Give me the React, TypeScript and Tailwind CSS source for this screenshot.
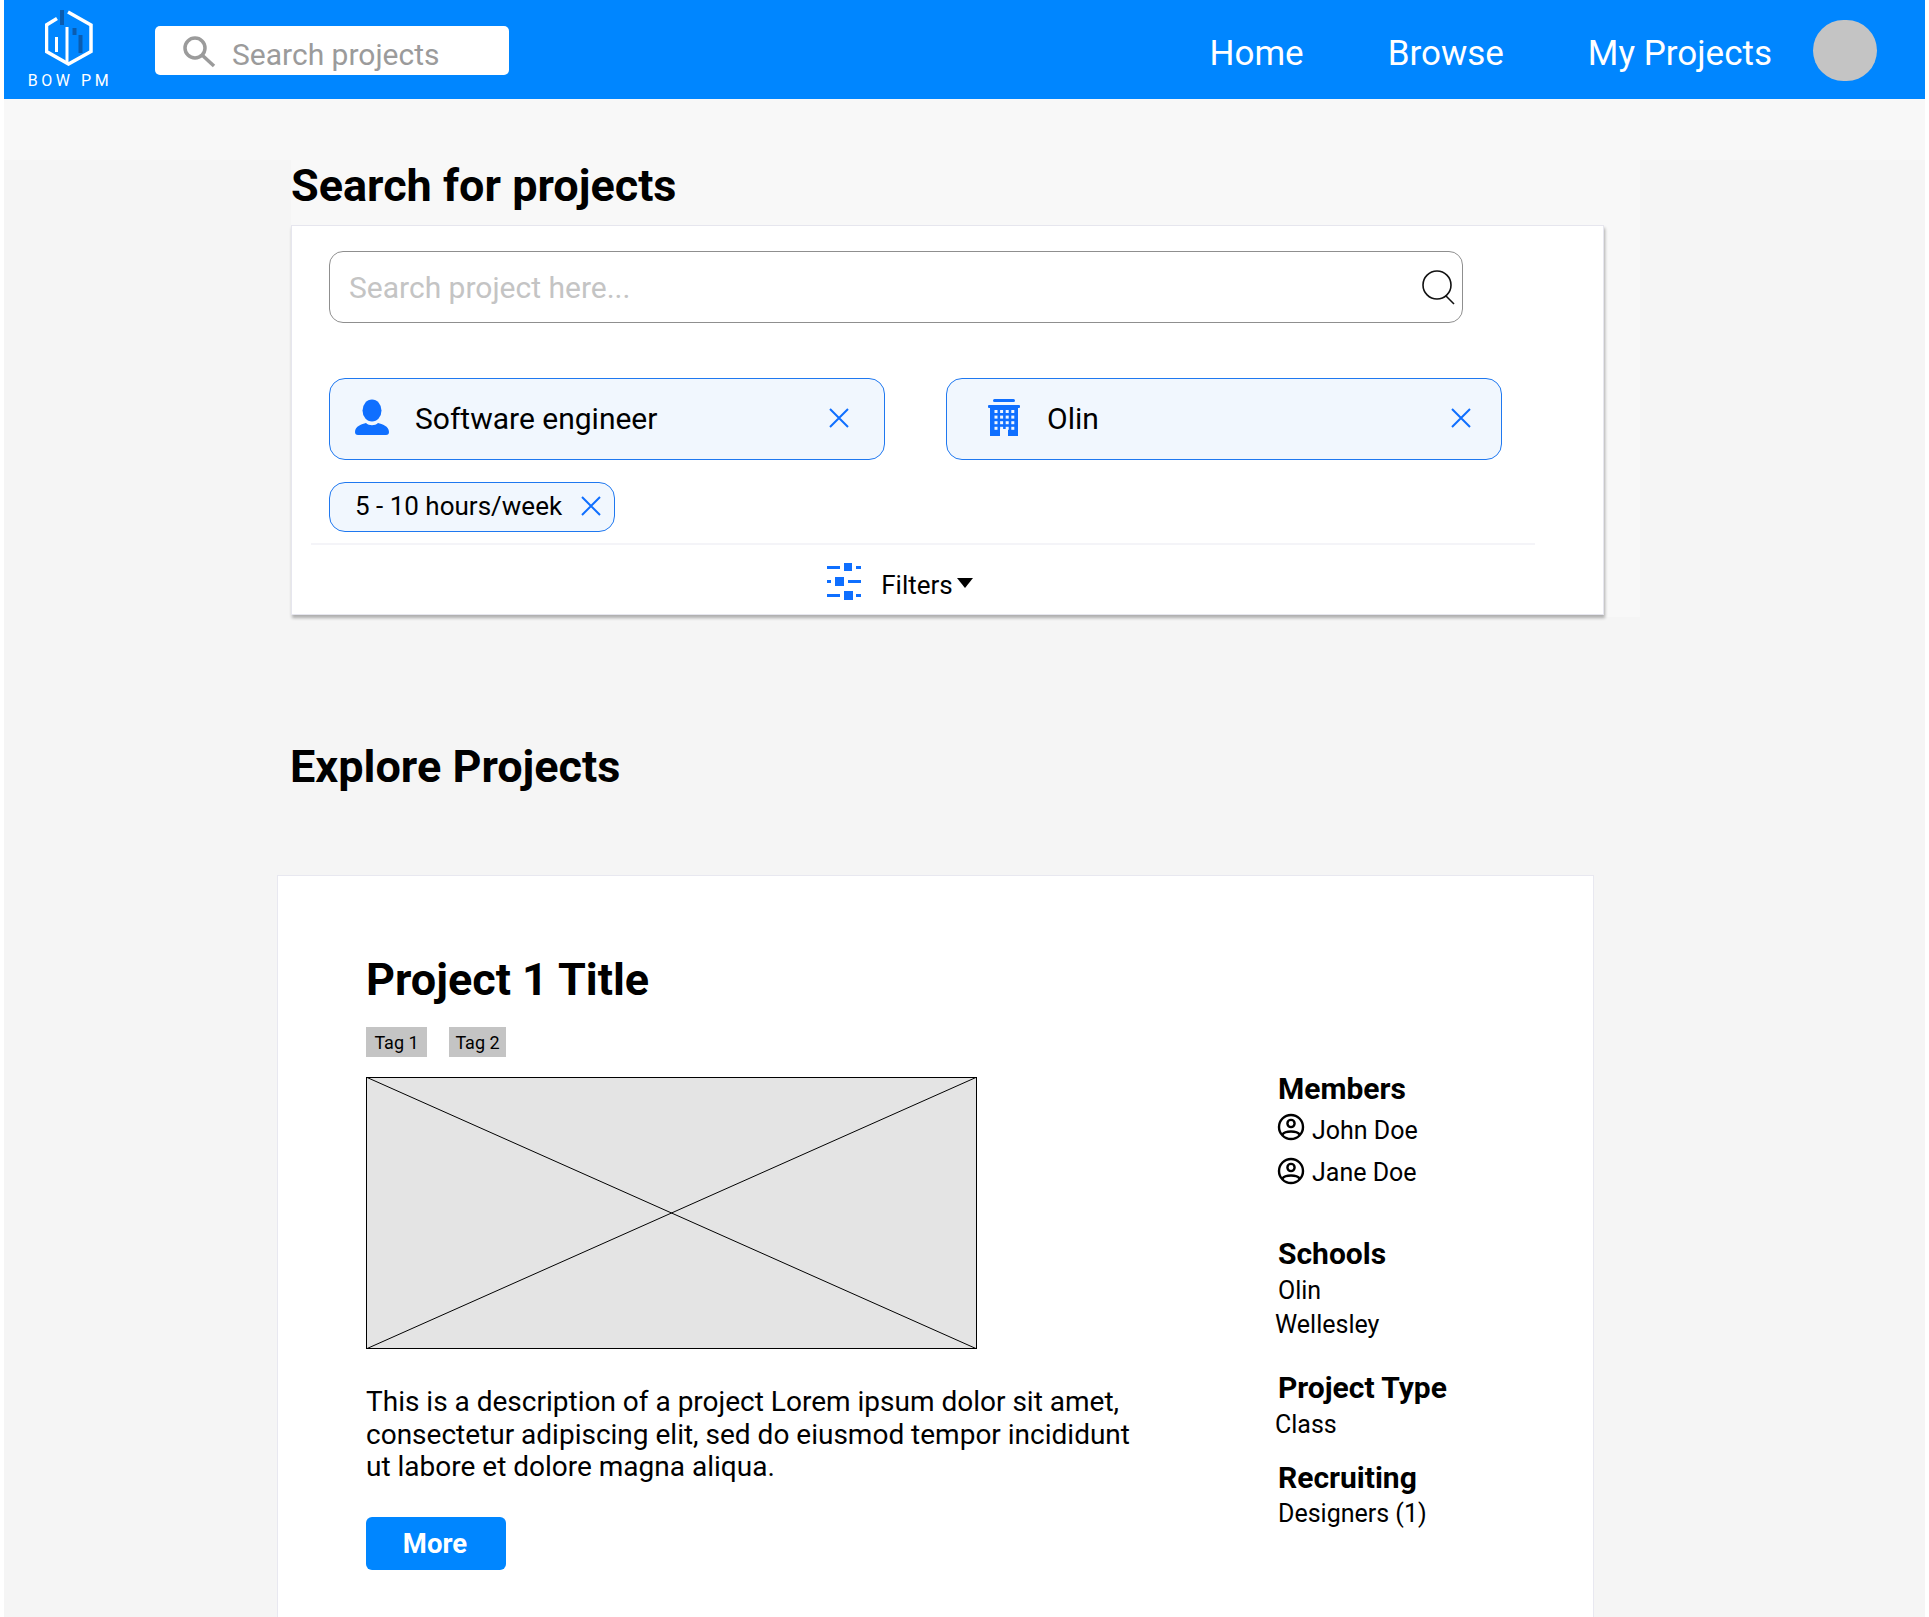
const roboto = "font-['Roboto',sans-serif]";

function Logo() {
  return (
    <svg width="48" height="56" viewBox="0 0 48 56" fill="none">
      <path d="M12 8.5 L1.5 15 V41.5 L23.5 54 L46 41.5 V15 L23 2" stroke="#fff" strokeWidth="3.5" />
      <path d="M22 17 V53" stroke="#fff" strokeWidth="3" />
      <path d="M11.5 27 V42" stroke="#fff" strokeWidth="3" />
      <path d="M17 0 V15" stroke="#0a5cb0" strokeWidth="4" />
      <path d="M29.5 18 V25" stroke="#0a5cb0" strokeWidth="4" />
      <path d="M35.5 25 V43" stroke="#0a5cb0" strokeWidth="4" />
    </svg>
  );
}

function CloseIcon() {
  return (
    <svg width="22" height="22" viewBox="0 0 22 22" fill="none" stroke="#0f6fff" strokeWidth="2">
      <path d="M2 2 L20 20 M20 2 L2 20" />
    </svg>
  );
}

function PersonIcon() {
  return (
    <svg width="36" height="38" viewBox="0 0 36 38" fill="#0f6fff">
      <ellipse cx="18" cy="11.5" rx="9.5" ry="11" />
      <path d="M1 33 C1 27 8 25 12 24 C15 27 21 27 24 24 C28 25 35 27 35 33 C35 35 34 36 32 36 H4 C2 36 1 35 1 33 Z" />
    </svg>
  );
}

function BuildingIcon() {
  const cells = [];
  for (let r = 0; r < 4; r++) {
    for (let c = 0; c < 4; c++) {
      cells.push(<rect key={`${r}-${c}`} x={6.5 + c * 5.6} y={11 + r * 5.6} width="3" height="3" fill="#f1f7fe" />);
    }
  }
  return (
    <svg width="32" height="38" viewBox="0 0 32 38">
      <rect x="5" y="0" width="22" height="3" rx="1.5" fill="#0f6fff" />
      <rect x="0" y="6" width="32" height="3" rx="1" fill="#0f6fff" />
      <rect x="2" y="8" width="28" height="29" fill="#0f6fff" />
      {cells}
      <rect x="12" y="30" width="8" height="7" fill="#f1f7fe" />
    </svg>
  );
}

function FilterIcon() {
  return (
    <svg width="34" height="38" viewBox="0 0 34 38" fill="#0f6fff">
      <rect x="0" y="4" width="13" height="3" />
      <rect x="17" y="1" width="8" height="8" />
      <rect x="29" y="4" width="5" height="3" />
      <rect x="0" y="18" width="4" height="3" />
      <rect x="8" y="15" width="9" height="9" />
      <rect x="21" y="18" width="13" height="3" />
      <rect x="0" y="32" width="13" height="3" />
      <rect x="17" y="29" width="9" height="9" />
      <rect x="29" y="32" width="5" height="3" />
    </svg>
  );
}

function MemberIcon() {
  return (
    <svg width="28" height="28" viewBox="0 0 28 28" fill="none" stroke="#000" strokeWidth="2.4">
      <circle cx="14" cy="14" r="12" />
      <circle cx="14" cy="10.5" r="3.6" />
      <path d="M5.5 21.5 C8 17.5 20 17.5 22.5 21.5" />
    </svg>
  );
}

function Chip({ icon, label, padding, gap }: { icon: React.ReactNode; label: string; padding: string; gap: string }) {
  return (
    <div className={`flex h-[82px] w-[556px] items-center rounded-[16px] border border-[#1f78f0] bg-[#f1f7fe] pb-[2px] ${padding}`}>
      {icon}
      <span className={`flex-1 text-[30px] text-black ${gap}`}>{label}</span>
      <CloseIcon />
    </div>
  );
}

function SideBlock({ title, className, children }: { title: string; className: string; children: React.ReactNode }) {
  return (
    <div className={className}>
      <h3 className="text-[30px] leading-[37px] font-bold text-black">{title}</h3>
      {children}
    </div>
  );
}

export default function App() {
  return (
    <div className={`h-[1617px] overflow-hidden bg-white px-[4px] ${roboto}`}>
      {/* Top nav */}
      <header className="flex h-[99px] items-center bg-[#0086ff]">
        <div className="mt-[10px] ml-[24px] flex w-[82px] flex-col items-center self-start">
          <Logo />
          <span className="mt-[7px] ml-[2px] text-[16px] leading-[16px] tracking-[0.22em] whitespace-nowrap text-white">BOW PM</span>
        </div>
        <div className="mt-[2px] ml-[45px] flex h-[49px] w-[354px] items-center rounded-[5px] bg-white pl-[26px]">
          <svg className="mt-[3px]" width="36" height="32" viewBox="0 0 36 32" fill="none" stroke="#9b9b9b" strokeWidth="3.5">
            <circle cx="14" cy="12" r="10" />
            <path d="M21 19 L33 30" />
          </svg>
          <span className="mt-[7px] ml-[15px] text-[30px] text-[#9b9b9b]">Search projects</span>
        </div>
        <nav className="ml-auto flex items-center text-[35px] text-white">
          <span className="mt-[10px]">Home</span>
          <span className="mt-[10px] ml-[84px]">Browse</span>
          <span className="mt-[10px] ml-[84px]">My Projects</span>
          <span className="mt-[2px] mr-[48px] ml-[41px] h-[61px] w-[64px] rounded-full bg-[#c4c4c4]" />
        </nav>
      </header>

      <div className="h-[61px] bg-[#f8f8f8]" />

      <main className="h-[1457px] bg-[#f5f5f5]">
        {/* Search panel */}
        <div className="ml-[287px] h-[457px] w-[1349px] bg-[#f8f8f8]">
          <h1 className="h-[65px] text-[45px] leading-[52px] font-bold text-black">Search for projects</h1>
          <section className="h-[390px] w-[1313px] border border-[#e6e6ee] bg-white pt-[25px] pl-[37px] shadow-[1px_3px_3px_rgba(0,0,0,0.3)]">
            <div className="flex h-[72px] w-[1134px] items-center justify-between rounded-[14px] border border-[#8f8f8f] pr-[5px] pl-[19px]">
              <span className="pt-[1px] text-[30px] text-[#c4c4c4]">Search project here...</span>
              <svg width="36" height="36" viewBox="0 0 36 36" fill="none" stroke="#111" strokeWidth="1.6">
                <circle cx="16" cy="16" r="14" />
                <path d="M25 27 L33 35" />
              </svg>
            </div>
            <div className="mt-[55px] flex gap-[61px]">
              <Chip icon={<PersonIcon />} label="Software engineer" padding="pl-[24px] pr-[34px]" gap="ml-[25px]" />
              <Chip icon={<span className="ml-[17px]"><BuildingIcon /></span>} label="Olin" padding="pl-[24px] pr-[29px]" gap="ml-[27px]" />
            </div>
            <div className="mt-[22px] flex h-[50px] w-[286px] items-center justify-between rounded-[16px] border border-[#1f78f0] bg-[#f1f7fe] pr-[12px] pb-[2px] pl-[25px]">
              <span className="text-[26px] whitespace-nowrap text-black">5 - 10 hours/week</span>
              <CloseIcon />
            </div>
            <div className="mt-[11px] -ml-[18px] flex h-[70px] w-[1224px] items-center justify-center border-t-2 border-[#f4f4f8] pt-[12px] pr-[46px]">
              <span className="-mt-[8px]"><FilterIcon /></span>
              <span className="ml-[20px] text-[26px] text-black">Filters</span>
              <span className="mb-[4px] ml-[4px] h-0 w-0 border-x-[8px] border-t-[10px] border-x-transparent border-t-black" />
            </div>
          </section>
        </div>

        <h2 className="mt-[124px] ml-[286px] text-[45px] leading-[52px] font-bold text-black">Explore Projects</h2>

        {/* Project card */}
        <article className="mt-[82px] ml-[273px] flex h-[900px] w-[1317px] border border-[#e8e8f0] bg-white pl-[88px]">
          <div className="w-[912px]">
            <h2 className="mt-[78px] text-[45px] leading-[52px] font-bold text-black">Project 1 Title</h2>
            <div className="mt-[21px] flex gap-[22px]">
              <span className="flex h-[30px] w-[61px] items-center justify-center bg-[#c4c4c4] text-[18px] text-black">Tag 1</span>
              <span className="flex h-[30px] w-[57px] items-center justify-center bg-[#c4c4c4] text-[18px] text-black">Tag 2</span>
            </div>
            <svg className="mt-[20px] block" width="611" height="272" viewBox="0 0 611 272">
              <rect x="0.5" y="0.5" width="610" height="271" fill="#e4e4e4" stroke="#000" />
              <path d="M0 0 L611 272 M611 0 L0 272" stroke="#000" strokeWidth="1" />
            </svg>
            <p className="mt-[37px] w-[775px] text-[28px] leading-[32.5px] text-black">
              This is a description of a project Lorem ipsum dolor sit amet, consectetur adipiscing elit, sed do eiusmod tempor incididunt ut labore et dolore magna aliqua.
            </p>
            <button className="mt-[33px] h-[53px] w-[140px] rounded-[6px] bg-[#0086ff] pt-[2px] pr-[2px] text-[27.5px] font-bold text-white">More</button>
          </div>

          <aside className="pt-[194px] text-[25px] leading-[34px] text-black">
            <SideBlock title="Members" className="">
              <div className="mt-[7px] -ml-[1px] flex items-center gap-[7px]">
                <span className="-mt-[8px]"><MemberIcon /></span>
                <span>John Doe</span>
              </div>
              <div className="mt-[8px] -ml-[1px] flex items-center gap-[7px]">
                <span className="-mt-[4px]"><MemberIcon /></span>
                <span>Jane Doe</span>
              </div>
            </SideBlock>
            <SideBlock title="Schools" className="mt-[45px]">
              <p className="mt-[2px]">Olin</p>
              <p className="-ml-[3px]">Wellesley</p>
            </SideBlock>
            <SideBlock title="Project Type" className="mt-[27px]">
              <p className="mt-[2px] -ml-[3px]">Class</p>
            </SideBlock>
            <SideBlock title="Recruiting" className="mt-[17px]">
              <p className="mt-[1px]">Designers (1)</p>
            </SideBlock>
          </aside>
        </article>
      </main>
    </div>
  );
}
